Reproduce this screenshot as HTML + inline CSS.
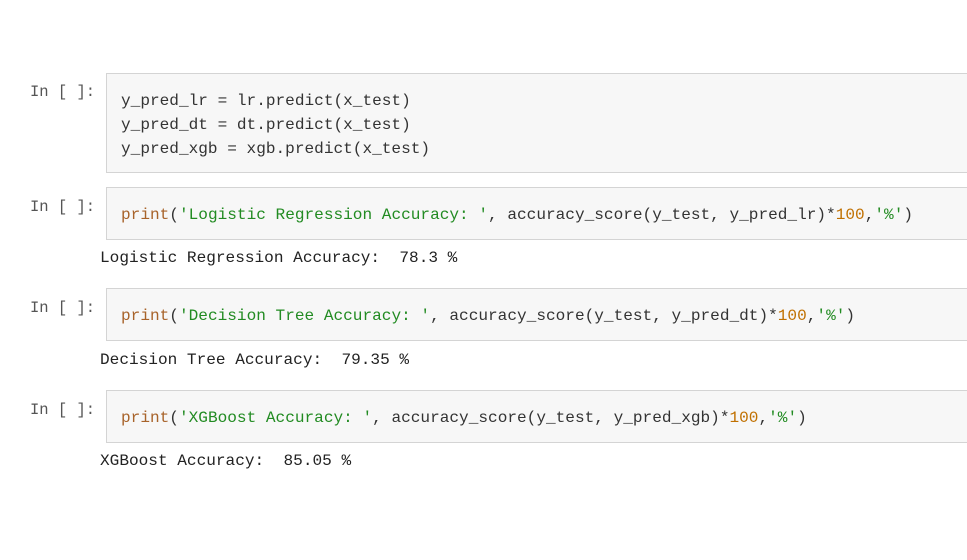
<!DOCTYPE html>
<html><head><meta charset="utf-8"><style>
body{margin:0;width:967px;height:560px;background:#fff;position:relative;overflow:hidden;font-family:"Liberation Mono",monospace;font-size:16.1px;color:#333}
.p{position:absolute;left:30px;color:#555;font-size:15.5px}
.b{position:absolute;left:106px;width:870px;background:#f7f7f7;border:1px solid #d4d4d4;box-sizing:border-box}
.t{position:absolute;left:121px;white-space:pre;line-height:24px}
.o{position:absolute;left:100px;white-space:pre;color:#222}
.k{color:#a8632a}.s{color:#228b22}.n{color:#c07000}
</style></head><body>
<div class="p" style="top:83px">In [ ]:</div>
<div class="b" style="top:73px;height:100px"></div>
<div class="t" style="top:89px">y_pred_lr = lr.predict(x_test)
y_pred_dt = dt.predict(x_test)
y_pred_xgb = xgb.predict(x_test)</div>

<div class="p" style="top:198px">In [ ]:</div>
<div class="b" style="top:187px;height:53px"></div>
<div class="t" style="top:203px"><span class="k">print</span>(<span class="s">'Logistic Regression Accuracy: '</span>, accuracy_score(y_test, y_pred_lr)*<span class="n">100</span>,<span class="s">'%'</span>)</div>
<div class="o" style="top:249px">Logistic Regression Accuracy:  78.3 %</div>

<div class="p" style="top:299px">In [ ]:</div>
<div class="b" style="top:288px;height:53px"></div>
<div class="t" style="top:304px"><span class="k">print</span>(<span class="s">'Decision Tree Accuracy: '</span>, accuracy_score(y_test, y_pred_dt)*<span class="n">100</span>,<span class="s">'%'</span>)</div>
<div class="o" style="top:351px">Decision Tree Accuracy:  79.35 %</div>

<div class="p" style="top:401px">In [ ]:</div>
<div class="b" style="top:390px;height:53px"></div>
<div class="t" style="top:406px"><span class="k">print</span>(<span class="s">'XGBoost Accuracy: '</span>, accuracy_score(y_test, y_pred_xgb)*<span class="n">100</span>,<span class="s">'%'</span>)</div>
<div class="o" style="top:452px">XGBoost Accuracy:  85.05 %</div>
</body></html>
